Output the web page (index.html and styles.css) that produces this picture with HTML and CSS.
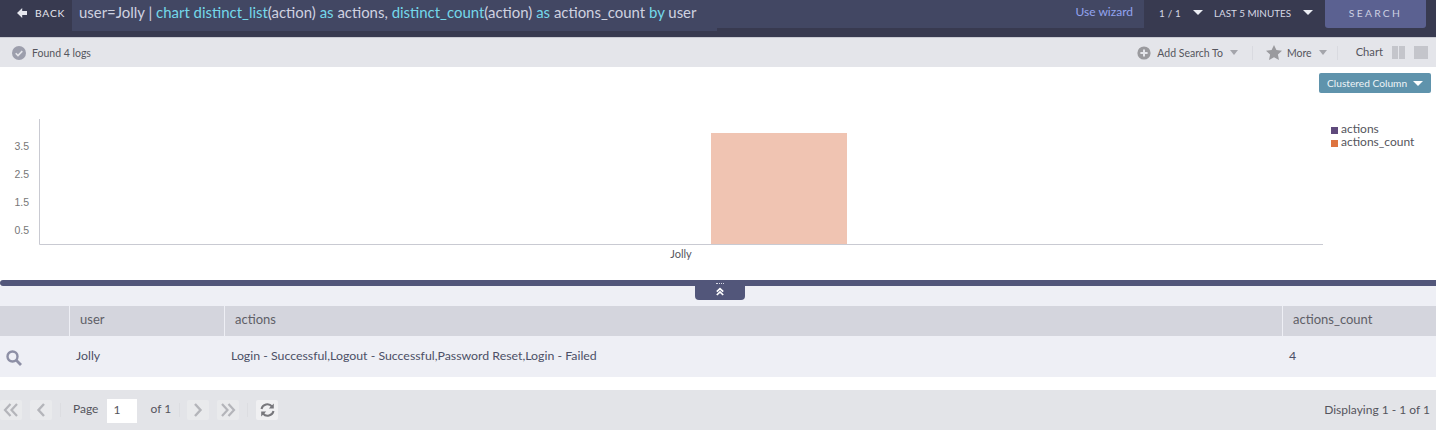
FILE: index.html
```html
<!DOCTYPE html>
<html lang="en">
<head>
<meta charset="utf-8">
<title>Search</title>
<link rel="stylesheet" href="styles.css">
</head>
<body>
<header class="topbar">
  <a class="back"><svg class="back-icon" width="10" height="10" viewBox="0 0 10 10"><path d="M5.200 0 0 5l5.200 5V7h4.800V3H5.200z"/></svg>BACK</a>
  <div class="query">
    <div class="query-text">user=Jolly | <b>chart</b> <b>distinct_list</b>(action) <b>as</b> actions, <b>distinct_count</b>(action) <b>as</b> actions_count <b>by</b> user</div>
    <a class="wizard">Use wizard</a>
  </div>
  <div class="range">
    <span class="page-count">1 / 1</span><i class="caret caret-light"></i>
    <span class="range-label">LAST 5 MINUTES</span><i class="caret caret-light"></i>
  </div>
  <button class="search">SEARCH</button>
</header>

<div class="toolbar">
  <svg class="ok" width="14" height="14" viewBox="0 0 14 14"><circle cx="7" cy="7" r="7" fill="#9c9eac"/><path d="M3.700 7.200 6 9.500l4.300-4.400" fill="none" stroke="#e4e5ea" stroke-width="1.600"/></svg>
  <span class="found">Found 4 logs</span>
  <div class="tools">
    <svg width="14" height="14" viewBox="0 0 14 14"><circle cx="7" cy="7" r="6.600" fill="#9a9a9e"/><path d="M7 3.400v7.200M3.400 7h7.200" stroke="#e4e5ea" stroke-width="2"/></svg>
    <span class="tool-label">Add Search To</span><i class="caret caret-grey"></i>
    <span class="sep"></span>
    <svg width="16" height="15" viewBox="0 0 16 15"><path d="M8 0l2.400 5 5.600.7-4.100 3.800 1.100 5.500L8 12.300 3 15l1.100-5.500L0 5.700 5.600 5z" fill="#9a9a9e"/></svg>
    <span class="tool-label tool-more">More</span><i class="caret caret-grey"></i>
    <span class="sep sep-b"></span>
    <span class="chart-label">Chart</span>
    <span class="view"><i></i><i></i></span>
    <span class="view view-one"><i></i></span>
  </div>
</div>

<section class="chart">
  <button class="chart-type">Clustered Column<i class="caret caret-white"></i></button>
  <svg class="plot" width="1436" height="213" viewBox="0 67 1436 213">
    <path d="M39.500 119V244.500H1323" fill="none" stroke="#c9cad2"/>
    <rect x="711" y="133" width="136" height="111" fill="#f0c4b2"/>
    <g class="tick">
      <text x="29" y="150" text-anchor="end">3.5</text>
      <text x="29" y="178" text-anchor="end">2.5</text>
      <text x="29" y="206" text-anchor="end">1.5</text>
      <text x="29" y="234" text-anchor="end">0.5</text>
    </g>
    <text class="cat" x="681" y="258" text-anchor="middle">Jolly</text>
    <rect x="1331" y="127" width="7" height="7" fill="#5f4a7c"/>
    <rect x="1331" y="140" width="7" height="7" fill="#de7440"/>
    <g class="legend">
      <text x="1341" y="133">actions</text>
      <text x="1341" y="145.500">actions_count</text>
    </g>
  </svg>
</section>

<div class="splitter">
  <div class="handle"><span class="grip"></span><svg width="8" height="9" viewBox="0 0 8 9"><path d="M.8 4.600 4 1.600l3.200 3M.8 8 4 5l3.200 3" fill="none" stroke="#fff" stroke-width="1.700"/></svg></div>
</div>

<main class="results">
  <div class="row head">
    <div class="c c0"></div>
    <div class="c c1">user</div>
    <div class="c c2">actions</div>
    <div class="c c3">actions_count</div>
  </div>
  <div class="row body">
    <div class="c c0"><svg width="16" height="16" viewBox="0 0 16 16"><circle cx="6.500" cy="6.500" r="5" fill="none" stroke="#8d8fa5" stroke-width="2.400"/><path d="M10.300 10.300 15 15" stroke="#8d8fa5" stroke-width="2.800"/></svg></div>
    <div class="c c1">Jolly</div>
    <div class="c c2">Login - Successful,Logout - Successful,Password Reset,Login - Failed</div>
    <div class="c c3">4</div>
  </div>
</main>

<footer class="pager">
  <span class="pbtn"><svg width="16" height="14" viewBox="0 0 16 14"><path d="M7.500 1 2 7l5.500 6M14 1 8.500 7l5.500 6" fill="none" stroke="#b4b5ba" stroke-width="2.200"/></svg></span>
  <span class="pbtn"><svg width="10" height="14" viewBox="0 0 10 14"><path d="M8 1 2.500 7 8 13" fill="none" stroke="#b4b5ba" stroke-width="2.400"/></svg></span>
  <span class="psep"></span>
  <span class="plabel">Page</span>
  <span class="pinput">1</span>
  <span class="plabel of">of 1</span>
  <span class="psep psep-b"></span>
  <span class="pbtn"><svg width="10" height="14" viewBox="0 0 10 14"><path d="M2 1l5.500 6L2 13" fill="none" stroke="#b4b5ba" stroke-width="2.400"/></svg></span>
  <span class="pbtn"><svg width="16" height="14" viewBox="0 0 16 14"><path d="M2 1l5.500 6L2 13M8.500 1 14 7l-5.500 6" fill="none" stroke="#b4b5ba" stroke-width="2.200"/></svg></span>
  <span class="psep"></span>
  <span class="pbtn refresh"><svg width="15" height="14" viewBox="0 0 15 14"><path d="M1.500 6A6 6 0 0 1 12 3.500M13.500 8A6 6 0 0 1 3 10.500" fill="none" stroke="#77777c" stroke-width="2"/><path d="M13.800 .6v5h-5zM1.200 13.400v-5h5z" fill="#77777c"/></svg></span>
  <span class="display">Displaying 1 - 1 of 1</span>
</footer>
</body>
</html>
```
FILE: styles.css
```css
* { box-sizing: border-box; }
html, body { margin: 0; height: 430px; overflow: hidden; }
body { font-family: Lato, "Noto Sans", sans-serif; background: #fff; color: #55555d; }
i { display: block; }

.topbar { display: flex; height: 38px; background: #383a50; border-bottom: 1px solid #c9cad2; align-items: flex-start; }
.back { flex: 0 0 72px; height: 25px; display: flex; align-items: center; padding-left: 17px; font-size: 10.300px; letter-spacing: .8px; color: #e6e7ee; }
.back-icon { fill: #e6e7ee; margin-right: 8px; }
.query { flex: 0 0 1072px; display: flex; align-items: flex-start; }
.query-text { flex: 0 0 645px; height: 31px; background: #424763; padding-left: 7px; line-height: 24px; font-size: 14.950px; color: #cfd2e0; white-space: nowrap; }
.query-text b { font-weight: 400; color: #74d8ea; }
.wizard { flex: 1; height: 28px; background: #424763; padding-right: 11px; text-align: right; line-height: 23px; font-size: 12px; color: #93a4f0; }
.range { flex: 1; display: flex; align-items: center; height: 25px; font-size: 9.900px; color: #d6d8e4; }
.page-count { margin-left: 15px; letter-spacing: .2px; }
.range-label { margin-left: 11px; }
.caret { width: 0; height: 0; border-style: solid; border-width: 5px 5px 0; border-color: #000 transparent transparent; }
.caret-light { border-top-color: #eceef4; margin-left: 12px; }
.search { flex: 0 0 101px; height: 28px; margin-right: 10px; border: 0; border-radius: 0 0 3px 3px; background: #5b6191; color: #ccd0e2; font: 10.300px Lato, sans-serif; letter-spacing: 2.300px; padding: 0 0 3px; }

.toolbar { display: flex; align-items: center; height: 29px; background: #e4e5ea; padding: 0 8px 0 12px; font-size: 10.500px; color: #55555d; }
.found { margin-left: 6px; }
.tools { margin-left: auto; display: flex; align-items: center; }
.tool-label { margin-left: 6px; }
.tool-more { margin-left: 5px; }
.caret-grey { border-width: 5px 4.500px 0; border-top-color: #a4a5ab; margin-left: 7px; }
.sep { width: 1px; height: 14px; background: #d9dae0; margin: 0 13px 0 14px; }
.sep-b { margin: 0 18px 0 10px; }
.chart-label { font-size: 11.200px; margin: -3px 9px 0 0; }
.view { display: flex; gap: 1px; margin-right: 9px; }
.view i { width: 6px; height: 13px; background: #c4c5cb; }
.view-one { margin: 0; }
.view-one i { width: 14px; }

.chart { position: relative; height: 213px; background: #fff; }
.plot { display: block; }
.tick { font: 10.500px "Liberation Sans", Arial, sans-serif; fill: #777; }
.cat { font: 11px Lato, sans-serif; fill: #55555d; }
.legend { font: 12px Lato, sans-serif; fill: #55555d; }
.chart-type { position: absolute; top: 6px; right: 5px; width: 112px; height: 20px; display: flex; align-items: center; justify-content: space-between; padding: 0 8px; border: 0; border-radius: 2px; background: #5f93ac; color: #eef4f7; font: 10.200px Lato, sans-serif; white-space: nowrap; }
.caret-white { border-top-color: #fff; }

.splitter { height: 6px; background: #52567a; border-radius: 3px 0 0 3px; display: flex; justify-content: center; }
.handle { position: relative; width: 50px; height: 20px; margin-left: 4px; background: #52567a; border-radius: 0 0 4px 4px; display: flex; flex-direction: column; align-items: center; padding-top: 3px; }
.grip { width: 8px; height: 0; border-top: 1px dotted #d5d7e4; }
.handle svg { display: block; margin-top: 3px; }

.results { padding-top: 20px; background: #eeeff5; height: 91px; }
.row { display: grid; grid-template-columns: 69px 155px 1058px 1fr; }
.head { height: 30px; background: #d4d5dd; font-size: 13px; color: #5f5f67; }
.head .c { border-left: 1px solid #eeeff5; padding: 5px 0 0 10px; }
.head .c0 { border: 0; }
.body { height: 41px; font-size: 12.330px; color: #4c4f66; }
.body .c { padding: 12px 0 0 7px; }
.body .c0 { padding: 14px 0 0 6px; }

.pager { display: flex; align-items: center; height: 40px; margin-top: 13px; background: #e3e4e8; padding: 0 6px 0 0; font-size: 12px; color: #55555d; }
.pbtn { width: 22px; height: 20px; border-radius: 2px; background: #e9eaec; display: flex; align-items: center; justify-content: center; margin-right: 8px; }
.refresh { background: #f0f0f2; }
.plabel { padding-bottom: 4px; }
.psep { width: 1px; height: 14px; background: #dcdde1; margin-right: 12px; }
.psep + .pbtn { margin-left: -4px; }
.psep-b { margin: 0 7px 0 8px; }
.psep-b + .pbtn { margin-left: 0; }
.pinput { width: 30px; height: 24px; background: #fff; margin: 2px 0 0 9px; padding: 3px 0 0 6px; }
.plabel.of { margin-left: 13px; }
.display { margin-left: auto; padding-bottom: 2px; }
```
